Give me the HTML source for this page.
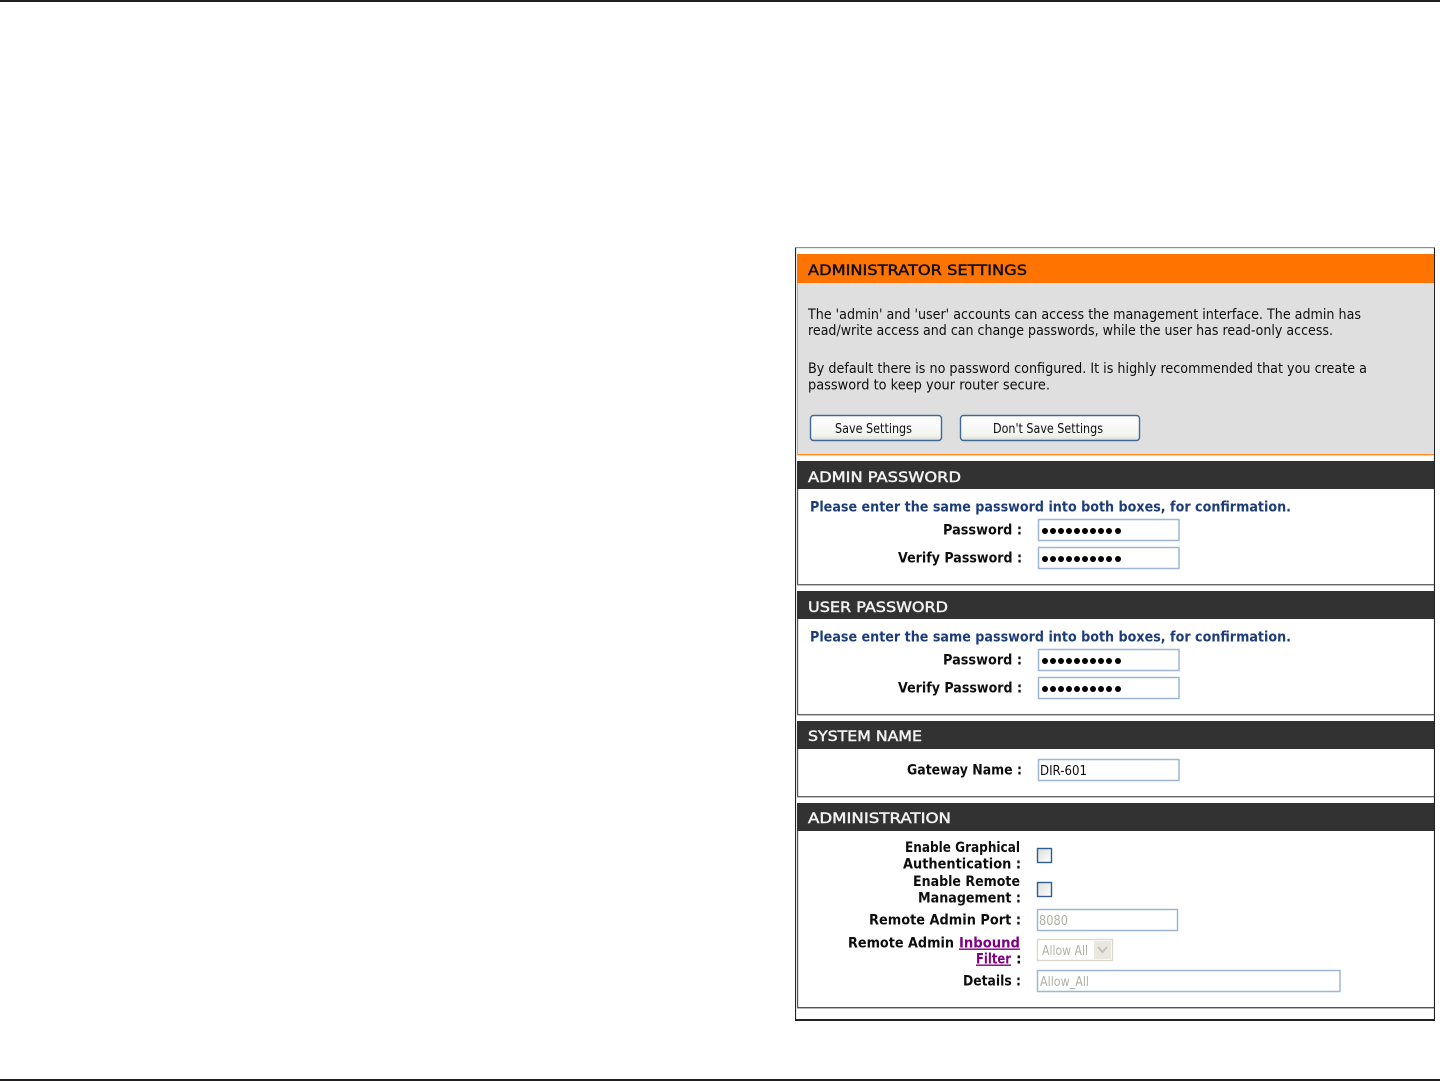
<!DOCTYPE html>
<html lang="en"><head><meta charset="utf-8"><title>Administrator Settings</title>
<style>
html,body{margin:0;padding:0;background:#fff;width:1440px;height:1081px;overflow:hidden}
svg{display:block}
text{font-family:"DejaVu Sans","Liberation Sans",sans-serif;font-size:14px;fill:#111}
.h{font-size:14px;stroke:#111;stroke-width:.45}
.w{fill:#f2f2f2;stroke:#f2f2f2}
.b{font-weight:bold;font-size:14px}
.n{fill:#1c3c78;font-weight:bold}
.d{fill:#b0b0a8}
.l{fill:#800080;font-weight:bold;text-decoration:underline}
.i{fill:#fff;stroke:#9db7d3;stroke-width:1.5}
</style></head><body>
<svg xmlns="http://www.w3.org/2000/svg" width="1440" height="1081" viewBox="0 0 1440 1081">
<defs><linearGradient id="cb" x1="0" y1="0" x2="1" y2="1"><stop offset="0" stop-color="#dcdcd7"/><stop offset="1" stop-color="#fff"/></linearGradient>
<linearGradient id="bt" x1="0" y1="0" x2="0" y2="1"><stop offset="0" stop-color="#fff"/><stop offset=".8" stop-color="#f3f3ee"/><stop offset="1" stop-color="#dcdcd2"/></linearGradient>
<filter id="soft" x="0" y="0" width="100%" height="100%"><feGaussianBlur stdDeviation="0.3"/></filter></defs>
<rect x="0" y="0" width="1440" height="2" fill="#231f20"/>
<rect x="0" y="1079" width="1440" height="2" fill="#231f20"/>

<g filter="url(#soft)">
<rect x="795.5" y="247.5" width="639" height="773" fill="#fff" stroke="#222" stroke-width="1.2"/>
<rect x="797" y="254" width="637" height="29" fill="#ff7300"/>
<rect x="797" y="283" width="637" height="171" fill="#dfdfdf"/>
<rect x="797" y="283" width="1" height="172" fill="#ff9a40"/>
<rect x="797" y="454" width="637" height="1.4" fill="#ff8a20"/>
<text class="h" x="808" y="275" textLength="219" lengthAdjust="spacingAndGlyphs">ADMINISTRATOR SETTINGS</text>
<text x="808" y="319" textLength="553" lengthAdjust="spacingAndGlyphs">The 'admin' and 'user' accounts can access the management interface. The admin has</text>
<text x="808" y="335" textLength="525" lengthAdjust="spacingAndGlyphs">read/write access and can change passwords, while the user has read-only access.</text>
<text x="808" y="373" textLength="559" lengthAdjust="spacingAndGlyphs">By default there is no password configured. It is highly recommended that you create a</text>
<text x="808" y="389.500" textLength="242" lengthAdjust="spacingAndGlyphs">password to keep your router secure.</text>
<rect x="810.5" y="415.5" width="131" height="25" rx="3" fill="url(#bt)" stroke="#3c6a96" stroke-width="1.4"/>
<rect x="960.5" y="415.5" width="179" height="25" rx="3" fill="url(#bt)" stroke="#3c6a96" stroke-width="1.4"/>
<text x="835" y="433" style="font-size:13px" textLength="77" lengthAdjust="spacingAndGlyphs">Save Settings</text>
<text x="993" y="433" style="font-size:13px" textLength="110" lengthAdjust="spacingAndGlyphs">Don't Save Settings</text>

<!-- Admin password -->
<rect x="797" y="461" width="637" height="28" fill="#333"/>
<rect x="797" y="489" width="1.2" height="95" fill="#555"/>
<rect x="797" y="584" width="637" height="1.4" fill="#666"/>
<text class="h w" x="808" y="482" textLength="153" lengthAdjust="spacingAndGlyphs">ADMIN PASSWORD</text>
<text class="n" x="810" y="511.500" textLength="481" lengthAdjust="spacingAndGlyphs">Please enter the same password into both boxes, for confirmation.</text>
<text class="b" x="943" y="534.500" textLength="79" lengthAdjust="spacingAndGlyphs">Password :</text>
<text class="b" x="898" y="562.500" textLength="124" lengthAdjust="spacingAndGlyphs">Verify Password :</text>
<rect class="i" x="1038.5" y="519.5" width="140.500" height="21"/>
<rect class="i" x="1038.5" y="547.5" width="140.500" height="21"/>
<g fill="#000"><circle cx="1045" cy="531" r="3"/><circle cx="1053" cy="531" r="3"/><circle cx="1061" cy="531" r="3"/><circle cx="1069" cy="531" r="3"/><circle cx="1077" cy="531" r="3"/><circle cx="1085" cy="531" r="3"/><circle cx="1093" cy="531" r="3"/><circle cx="1101" cy="531" r="3"/><circle cx="1109" cy="531" r="3"/><circle cx="1118" cy="531" r="3"/>
<circle cx="1045" cy="559" r="3"/><circle cx="1053" cy="559" r="3"/><circle cx="1061" cy="559" r="3"/><circle cx="1069" cy="559" r="3"/><circle cx="1077" cy="559" r="3"/><circle cx="1085" cy="559" r="3"/><circle cx="1093" cy="559" r="3"/><circle cx="1101" cy="559" r="3"/><circle cx="1109" cy="559" r="3"/><circle cx="1118" cy="559" r="3"/></g>

<!-- User password -->
<rect x="797" y="591" width="637" height="28" fill="#333"/>
<rect x="797" y="619" width="1.2" height="95" fill="#555"/>
<rect x="797" y="714" width="637" height="1.4" fill="#666"/>
<text class="h w" x="808" y="612" textLength="140" lengthAdjust="spacingAndGlyphs">USER PASSWORD</text>
<text class="n" x="810" y="641.500" textLength="481" lengthAdjust="spacingAndGlyphs">Please enter the same password into both boxes, for confirmation.</text>
<text class="b" x="943" y="664.500" textLength="79" lengthAdjust="spacingAndGlyphs">Password :</text>
<text class="b" x="898" y="692.500" textLength="124" lengthAdjust="spacingAndGlyphs">Verify Password :</text>
<rect class="i" x="1038.5" y="649.5" width="140.500" height="21"/>
<rect class="i" x="1038.5" y="677.5" width="140.500" height="21"/>
<g fill="#000"><circle cx="1045" cy="661" r="3"/><circle cx="1053" cy="661" r="3"/><circle cx="1061" cy="661" r="3"/><circle cx="1069" cy="661" r="3"/><circle cx="1077" cy="661" r="3"/><circle cx="1085" cy="661" r="3"/><circle cx="1093" cy="661" r="3"/><circle cx="1101" cy="661" r="3"/><circle cx="1109" cy="661" r="3"/><circle cx="1118" cy="661" r="3"/>
<circle cx="1045" cy="689" r="3"/><circle cx="1053" cy="689" r="3"/><circle cx="1061" cy="689" r="3"/><circle cx="1069" cy="689" r="3"/><circle cx="1077" cy="689" r="3"/><circle cx="1085" cy="689" r="3"/><circle cx="1093" cy="689" r="3"/><circle cx="1101" cy="689" r="3"/><circle cx="1109" cy="689" r="3"/><circle cx="1118" cy="689" r="3"/></g>

<!-- System name -->
<rect x="797" y="721" width="637" height="28" fill="#333"/>
<rect x="797" y="749" width="1.2" height="47" fill="#555"/>
<rect x="797" y="796" width="637" height="1.4" fill="#666"/>
<text class="h w" x="808" y="741" textLength="114" lengthAdjust="spacingAndGlyphs">SYSTEM NAME</text>
<text class="b" x="907" y="774.500" textLength="115" lengthAdjust="spacingAndGlyphs">Gateway Name :</text>
<rect class="i" x="1038.5" y="759.5" width="140.500" height="21"/>
<text x="1040" y="775" style="font-size:13px" textLength="47" lengthAdjust="spacingAndGlyphs">DIR-601</text>

<!-- Administration -->
<rect x="797" y="803" width="637" height="28" fill="#333"/>
<rect x="797" y="831" width="1.2" height="176" fill="#555"/>
<rect x="797" y="1007" width="637" height="1.4" fill="#555"/>
<text class="h w" x="808" y="823" textLength="143" lengthAdjust="spacingAndGlyphs">ADMINISTRATION</text>
<text class="b" x="905" y="852" textLength="115" lengthAdjust="spacingAndGlyphs">Enable Graphical</text>
<text class="b" x="903" y="868.500" textLength="118" lengthAdjust="spacingAndGlyphs">Authentication :</text>
<text class="b" x="913" y="886" textLength="107" lengthAdjust="spacingAndGlyphs">Enable Remote</text>
<text class="b" x="918" y="902.500" textLength="103" lengthAdjust="spacingAndGlyphs">Management :</text>
<text class="b" x="869" y="924.500" textLength="152" lengthAdjust="spacingAndGlyphs">Remote Admin Port :</text>
<text class="b" x="848" y="947.500" textLength="106" lengthAdjust="spacingAndGlyphs">Remote Admin</text>
<text class="l" x="959" y="947.500" textLength="61" lengthAdjust="spacingAndGlyphs">Inbound</text>
<text class="l" x="976" y="963.500" textLength="35" lengthAdjust="spacingAndGlyphs">Filter</text>
<text class="b" x="1016" y="963.500">:</text>
<text class="b" x="963" y="985.500" textLength="58" lengthAdjust="spacingAndGlyphs">Details :</text>
<rect x="1037.5" y="848.5" width="14" height="14" fill="url(#cb)" stroke="#2f5f90" stroke-width="1.4"/>
<rect x="1037.5" y="882.5" width="14" height="14" fill="url(#cb)" stroke="#2f5f90" stroke-width="1.4"/>
<rect class="i" x="1037.5" y="909.5" width="140" height="21"/>
<text class="d" x="1039" y="925" style="font-size:13px" textLength="29" lengthAdjust="spacingAndGlyphs">8080</text>
<rect x="1037.5" y="939.5" width="75" height="21" fill="#fff" stroke="#d8d8cc" stroke-width="1.4"/>
<rect x="1094" y="941" width="17" height="18" fill="#e8e8e0"/>
<path d="M1098 947l4.500 5 4.500-5" fill="none" stroke="#c0c0b8" stroke-width="2"/>
<text class="d" x="1042" y="955" style="font-size:13px" textLength="46" lengthAdjust="spacingAndGlyphs">Allow All</text>
<rect class="i" x="1037.5" y="970.5" width="302.500" height="21"/>
<text class="d" x="1040" y="986" style="font-size:13px" textLength="49" lengthAdjust="spacingAndGlyphs">Allow_All</text>
<rect x="795" y="1019" width="640" height="2" fill="#222"/>
</g>
</svg>
</body></html>
